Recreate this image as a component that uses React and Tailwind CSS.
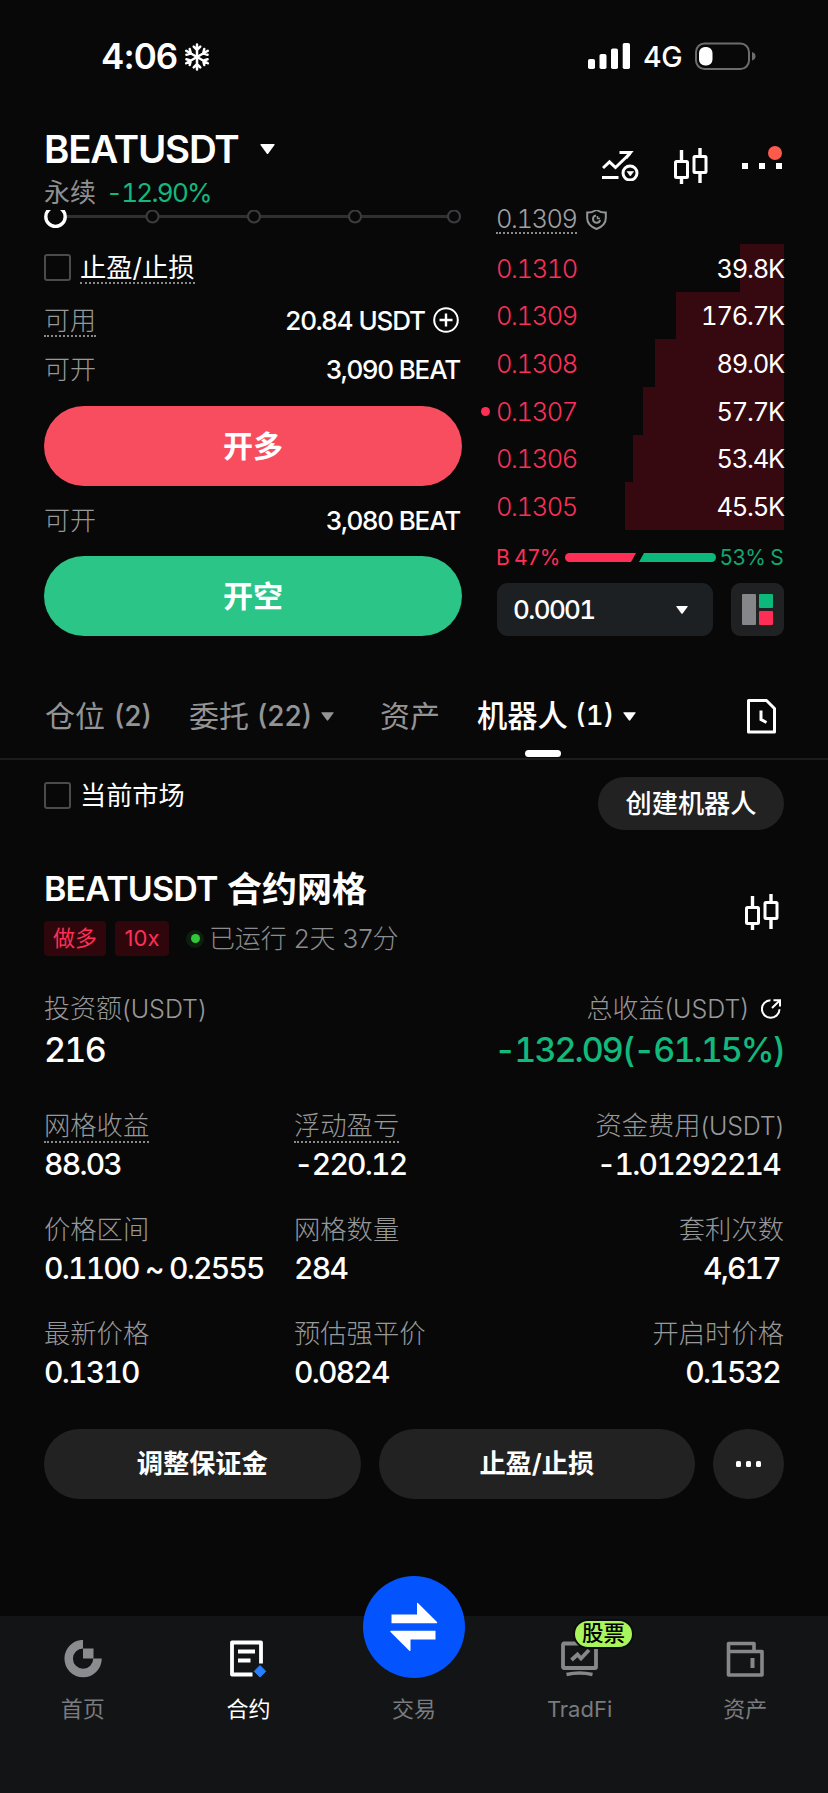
import React from 'react';

const asks = [
  { price: '0.1310', amount: '39.8K', depth: 44 },
  { price: '0.1309', amount: '176.7K', depth: 108 },
  { price: '0.1308', amount: '89.0K', depth: 129 },
  { price: '0.1307', amount: '57.7K', depth: 141, mine: true },
  { price: '0.1306', amount: '53.4K', depth: 151 },
  { price: '0.1305', amount: '45.5K', depth: 159 },
];

const stats = [
  [
    { label: '网格收益', value: '88.03', hint: true },
    { label: '浮动盈亏', value: '-220.12', hint: true },
    { label: '资金费用', unit: '(USDT)', value: '-1.01292214' },
  ],
  [
    { label: '价格区间', value: '0.1100 ~ 0.2555' },
    { label: '网格数量', value: '284' },
    { label: '套利次数', value: '4,617' },
  ],
  [
    { label: '最新价格', value: '0.1310' },
    { label: '预估强平价', value: '0.0824' },
    { label: '开启时价格', value: '0.1532' },
  ],
];

const Caret = ({ className }) => (
  <svg viewBox="0 0 15 10" className={className} fill="currentColor">
    <path d="M1 0h13q1 0 .5 1L8.3 9.4q-.8 1-1.6 0L.5 1Q0 0 1 0z" />
  </svg>
);

const Candles = () => (
  <svg width="34" height="36" viewBox="0 0 34 36" fill="none" stroke="#fff" strokeWidth="3">
    <rect x="1.5" y="13.5" width="12" height="16" rx="1" />
    <path d="M7.5 2v11M7.5 30v6" strokeWidth="3.4" />
    <rect x="20" y="8.5" width="12" height="16" rx="1" />
    <path d="M26 0v8M26 25v10" strokeWidth="3.4" />
  </svg>
);

const Checkbox = () => <span className="size-[27px] rounded-[3px] border-2 border-[#4b4b4d]" />;

const StatusBar = () => (
  <div className="flex h-[112px] items-center pl-[101px] pr-[72px]">
    <span className="w-[76px] text-[35px] font-semibold leading-none tracking-[-0.9px]">4:06</span>
    <svg className="ml-[7px] mt-[2px]" width="26" height="28" viewBox="0 0 26 28" fill="none" stroke="#fff" strokeWidth="2.5" strokeLinecap="round">
      {[0, 60, 120, 180, 240, 300].map((deg) => (
        <path key={deg} d="M13 14V1.5M9.7 3.7L13 6.9l3.3-3.2" transform={`rotate(${deg} 13 14)`} />
      ))}
    </svg>
    <svg className="ml-auto" width="42" height="26" viewBox="0 0 42 26" fill="#fff">
      <rect x="0" y="16" width="7" height="10" rx="1.8" />
      <rect x="11.5" y="11" width="7" height="15" rx="1.8" />
      <rect x="23" y="5.5" width="7" height="20.5" rx="1.8" />
      <rect x="34.7" y="0" width="7.3" height="26" rx="1.8" />
    </svg>
    <span className="ml-[13px] mt-[3px] w-[39px] text-[28.5px] font-medium leading-none tracking-[-0.5px]">4G</span>
    <svg className="ml-[13px]" width="61" height="28" viewBox="0 0 61 28">
      <rect x="1" y="1.5" width="53" height="25.5" rx="8.5" fill="none" stroke="#6c6c6c" strokeWidth="2" />
      <rect x="4" y="5" width="13.5" height="18.5" rx="6" fill="#fff" />
      <path d="M57 10q3.5 1 3.5 4.3T57 18.5z" fill="#6c6c6c" />
    </svg>
  </div>
);

const Header = () => (
  <div className="flex h-[98px] justify-between pl-[44px] pr-[46px]">
    <div>
      <div className="flex h-[74px] items-center">
        <h1 className="w-[194px] whitespace-nowrap text-[38.5px] font-semibold leading-none tracking-[-1.2px]">BEATUSDT</h1>
        <Caret className="ml-[22px] h-[10px] w-[15px]" />
      </div>
      <div className="-mt-[6px] flex h-[26px] items-center text-[26px] leading-none">
        <span className="text-[#8e8f91]">永续</span>
        <span className="ml-[10px] tabular-nums tracking-[-1.7px] text-[#12b87c]">-12.90%</span>
      </div>
    </div>
    <div className="flex items-start pt-9">
      <svg className="mt-[3px]" width="37" height="30" viewBox="0 0 37 30" fill="none" stroke="#fff" strokeWidth="3">
        <path d="M1 17l6.5-6.2 6 5.7L28 2.5" />
        <path d="M17.5 1.5H28.5L24 7" />
        <path d="M0 26.5h16.5" />
        <circle cx="28" cy="22" r="7" />
        <path d="M25 20.5h6.6L28.3 25z" fill="#fff" strokeWidth="0.6" />
      </svg>
      <div className="ml-[35px]"><Candles /></div>
      <div className="relative ml-[34px] mt-[15px] flex w-[40px] justify-between">
        <span className="size-[6px] bg-white" />
        <span className="size-[6px] bg-white" />
        <span className="size-[6px] bg-white" />
        <span className="absolute -top-[17px] left-[26px] size-[14px] rounded-full bg-[#fc5a4a]" />
      </div>
    </div>
  </div>
);

const AvailRow = ({ className, value }) => (
  <div className={`flex items-center justify-between text-[26px] leading-none ${className}`}>
    <span className="font-light text-[#97989a]">可开</span>
    <span className="pr-[2px] font-medium tracking-[-1.15px]">{value}</span>
  </div>
);

const OrderForm = () => (
  <div className="w-[418px]">
    <svg className="h-[30px] w-[418px]" viewBox="0 0 418 30" fill="none">
      <path d="M22 6.5H404" stroke="#303033" strokeWidth="3" />
      <circle cx="11.5" cy="6.7" r="9.7" fill="#080808" stroke="#fff" strokeWidth="3.4" />
      {[108.5, 210, 311, 410].map((cx) => (
        <circle key={cx} cx={cx} cy="6.5" r="6" fill="#080808" stroke="#3c3c3f" strokeWidth="2.2" />
      ))}
    </svg>
    <div className="flex h-[55px] items-center">
      <Checkbox />
      <span className="ml-[9px] mt-[2px] whitespace-nowrap border-b-2 border-dotted border-[#8a8a8a] text-[26.3px] leading-[29px]">止盈/止损</span>
    </div>
    <div className="flex h-[50px] items-center justify-between text-[26px]">
      <span className="mt-[2px] border-b-2 border-dotted border-[#8a8a8a] font-light leading-[29px] text-[#97989a]">可用</span>
      <span className="flex items-center gap-[8px] pr-[3px]">
        <span className="font-medium tracking-[-1.1px]">20.84 USDT</span>
        <svg width="26" height="26" viewBox="0 0 26 26" fill="none" stroke="#fff" strokeWidth="2">
          <circle cx="13" cy="13" r="11.8" />
          <path d="M13 6.5v13M6.5 13h13" strokeWidth="2.4" />
        </svg>
      </span>
    </div>
    <AvailRow className="h-[50px]" value="3,090 BEAT" />
    <button className="mt-[11px] h-[80px] w-full rounded-full bg-[#f84d5f] text-[30px] font-bold">开多</button>
    <AvailRow className="h-[70px] pb-[1px]" value="3,080 BEAT" />
    <button className="h-[80px] w-full rounded-full bg-[#2cc588] text-[30px] font-bold">开空</button>
  </div>
);

const OrderBook = () => (
  <div className="w-[288px] tabular-nums">
    <div className="flex h-[34px] items-start">
      <span className="-mt-[4px] border-b-2 border-dotted border-[#8a8a8a] text-[25.5px] font-light leading-[26px] tracking-[-1.45px] text-[#a0a1a2]">0.1309</span>
      <svg className="ml-[9px]" width="21" height="20" viewBox="0 0 21 20" fill="none" stroke="#929394" strokeWidth="2">
        <path d="M1.2 2.5Q6 2.8 10.5 0Q15 2.8 19.8 2.5V8q0 7.5-9.300 11Q1.2 15.5 1.2 8z" />
        <path d="M10 5.6a3.6 3.6 0 1 0 4.1 4.4" />
        <path d="M11.5 6v2.5h2.5" strokeWidth="1.5" />
      </svg>
    </div>
    {asks.map((row) => (
      <div key={row.price} className="relative flex h-[47.7px] items-center justify-between pt-[1px] text-[25.5px] leading-none">
        <span className="absolute right-0 top-0 h-full bg-[#36080f]" style={{ width: row.depth }} />
        {row.mine && <span className="absolute -left-[15px] size-[9px] rounded-full bg-[#ff2e57]" />}
        <span className="relative font-light tracking-[-1.4px] text-[#fb3059]">{row.price}</span>
        <span className="relative tracking-[-1.2px]">{row.amount}</span>
      </div>
    ))}
    <div className="mt-[16px] flex h-[22px] items-center whitespace-nowrap text-[21px] leading-none tracking-[-0.7px]">
      <span className="w-[69px] text-[#ff2e57]">B 47%</span>
      <svg width="151" height="9" viewBox="0 0 151 9">
        <path d="M4.5 0H71l-5 9H4.5a4.5 4.5 0 0 1 0-9z" fill="#ff2e57" />
        <path d="M79 0h67.5a4.5 4.5 0 0 1 0 9H74z" fill="#0cb97b" />
      </svg>
      <span className="ml-auto pr-[1px] text-right text-[#12a671]">53% S</span>
    </div>
    <div className="mt-[15px] flex justify-between">
      <div className="ml-[1px] flex h-[53px] w-[216px] items-center justify-between rounded-[11px] bg-[#1d2023] pl-[16px] pr-[25px]">
        <span className="text-[26px] font-medium leading-none tracking-[-1.6px]">0.0001</span>
        <Caret className="h-[8px] w-[12px]" />
      </div>
      <div className="flex size-[53px] items-center justify-center rounded-[9px] bg-[#1f2123]">
        <div className="grid size-[31px] grid-cols-2 grid-rows-2 gap-[3px]">
          <span className="row-span-2 rounded-[1px] bg-[#85868a]" />
          <span className="rounded-[1px] bg-[#0cb97b]" />
          <span className="rounded-[1px] bg-[#ff2e57]" />
        </div>
      </div>
    </div>
  </div>
);

const Tabs = () => (
  <div className="mt-[72px] h-[52px] border-b-2 border-[#1c1c1c]">
    <div className="flex h-[50px] items-start whitespace-nowrap pl-[45px] pr-[52px] text-[30px] leading-none text-[#939496]">
      <span className="-mt-[7px] flex w-[144px] items-center">仓位<span className="ml-[9px] text-[28px] font-medium">(2)</span></span>
      <span className="-mt-[7px] flex w-[191px] items-center">委托<span className="ml-[8px] text-[28px] font-medium">(22)</span><Caret className="ml-[9px] h-[9px] w-[13px]" /></span>
      <span className="-mt-[7px] w-[97px]">资产</span>
      <span className="relative flex h-[50px] items-start font-medium text-white">
        <span className="-mt-[7px] flex items-center text-[30.3px]">
          机器人<span className="ml-[7px] text-[27.5px] tabular-nums">(1)</span>
          <Caret className="ml-[9px] h-[9px] w-[13px]" />
        </span>
        <span className="absolute bottom-[1px] left-[48px] h-[7px] w-[36px] rounded-full bg-white" />
      </span>
      <svg className="-mt-[9px] ml-auto" width="29" height="35" viewBox="0 0 29 35" fill="none" stroke="#fff" strokeWidth="3">
        <path d="M1.5 1.5H19.5L27.5 9.5V33H1.5z" strokeLinejoin="round" />
        <path d="M14 11.5v9l5.5 3" />
      </svg>
    </div>
  </div>
);

const Stat = ({ label, unit, value, hint, right }) => (
  <div className={right ? 'text-right' : ''}>
    <div className="h-[38px] text-[26.3px] font-light leading-[32px] text-[#97989a]">
      {hint ? <span className="inline-block border-b-2 border-dotted border-[#8a8a8a] leading-[31px]">{label}</span> : label}
      {unit && <span className="text-[25px] tracking-[-0.2px]">{unit}</span>}
    </div>
    <div className={`-mt-[1px] whitespace-nowrap text-[30px] font-medium tabular-nums leading-[34px] tracking-[-1.75px] ${right ? 'pr-[4px]' : ''}`}>{value}</div>
  </div>
);

const BotCard = () => (
  <div className="px-[44px]">
    <div className="flex justify-between">
      <div className="flex h-[70px] items-center text-[26.2px] leading-none">
        <Checkbox />
        <span className="ml-[9px] mt-[2px]">当前市场</span>
      </div>
      <button className="mt-[17px] h-[53px] w-[186px] rounded-full bg-[#222] pt-[1px] text-[26.2px] font-medium">创建机器人</button>
    </div>
    <div className="mt-[38px] flex justify-between">
      <div>
        <h2 className="flex h-[42px] items-center whitespace-nowrap text-[34px] font-semibold leading-none">
          <span className="w-[183px] tracking-[-0.85px]">BEATUSDT</span>
          <span className="text-[35px]">合约网格</span>
        </h2>
        <div className="mt-[11px] flex h-[35px] items-center whitespace-nowrap text-[22px] text-[#ff2e57]">
          <span className="flex h-[35px] w-[62px] items-center justify-center rounded-[4px] bg-[#30060d]">做多</span>
          <span className="ml-[9px] flex h-[35px] w-[54px] items-center justify-center rounded-[4px] bg-[#30060d]">10x</span>
          <span className="ml-[17px] flex size-[18px] items-center justify-center rounded-full bg-[#0c1f0d]">
            <span className="size-[9px] rounded-full bg-[#32c73a]" />
          </span>
          <span className="ml-[5px] text-[26px] font-light tracking-[-0.15px] text-[#8b8c8e]">已运行 2天 37分</span>
        </div>
      </div>
      <div className="pr-[5px] pt-[26px]"><Candles /></div>
    </div>
    <div className="mt-[37px] flex justify-between">
      <div>
        <div className="text-[26px] font-light leading-[32px] text-[#97989a]">投资额<span className="text-[25px]">(USDT)</span></div>
        <div className="mt-[5px] text-[34px] font-medium tabular-nums leading-[40px] tracking-[-1.7px]">216</div>
      </div>
      <div className="text-right">
        <div className="flex items-center justify-end text-[26px] font-light leading-[32px] text-[#97989a]">
          总收益<span className="text-[25px]">(USDT)</span>
          <svg className="ml-[12px] mr-[3px]" width="20" height="20" viewBox="0 0 20 20" fill="none" stroke="#fff" strokeWidth="2">
            <path d="M9.5 1.2a8.8 8.8 0 1 0 9 9" />
            <path d="M12.5 1.2H19v6.3M18.5 1.7L11 9" />
          </svg>
        </div>
        <div className="mt-[5px] whitespace-nowrap text-[34px] font-medium tabular-nums leading-[40px] tracking-[-1.95px] text-[#12b87c]">-132.09(-61.15%)</div>
      </div>
    </div>
    <div className="mt-[40px] flex flex-col gap-[33px]">
      {stats.map((row) => (
        <div key={row[0].label} className="grid grid-cols-[250px_200px_1fr]">
          <Stat {...row[0]} />
          <Stat {...row[1]} />
          <Stat {...row[2]} right />
        </div>
      ))}
    </div>
    <div className="mt-[40px] flex h-[70px] gap-[18px] text-[26.2px] font-semibold">
      <button className="flex-1 rounded-full bg-[#222]">调整保证金</button>
      <button className="flex-1 rounded-full bg-[#222]">止盈/止损</button>
      <button className="flex w-[71px] items-center justify-center gap-[4.5px] rounded-full bg-[#222]">
        <span className="size-[5.5px] rounded-[1.5px] bg-white" />
        <span className="size-[5.5px] rounded-[1.5px] bg-white" />
        <span className="size-[5.5px] rounded-[1.5px] bg-white" />
      </button>
    </div>
  </div>
);

const NavItem = ({ label, active, children }) => (
  <div className={`flex flex-1 flex-col items-center text-[22px] leading-none ${active ? 'text-white' : 'text-[#797b7e]'}`}>
    <div className="relative h-[59px] pt-[1px]">{children}</div>
    <span>{label}</span>
  </div>
);

const BottomNav = () => (
  <div className="mt-auto flex h-[177px] bg-[#131416] pt-[23px]">
    <NavItem label="首页">
      <svg width="38" height="38" viewBox="0 0 38 38">
        <path d="M19 4.2A14.4 14.4 0 1 0 33.5 18.5" fill="none" stroke="#8a8c8f" strokeWidth="8.5" />
        <path d="M19 8.5h10.5v10H19z" fill="#8a8c8f" />
      </svg>
    </NavItem>
    <NavItem label="合约" active>
      <svg width="38" height="38" viewBox="0 0 38 38" fill="none" stroke="#fff" strokeWidth="3.8">
        <path d="M32 23.5V2.5H3V34.5H23.5" strokeLinejoin="round" />
        <path d="M9 11.5h17M9 20.5h12.5" />
        <path d="M31 25.5l5.7 5.8-5.7 5.8-5.7-5.8z" fill="#2680ff" stroke="#2680ff" strokeWidth="1" strokeLinejoin="round" />
      </svg>
    </NavItem>
    <NavItem label="交易">
      <div className="absolute -top-[63px] left-1/2 flex size-[102px] -translate-x-1/2 items-center justify-center rounded-full bg-[#0354ff]">
        <svg width="48" height="50" viewBox="0 0 48 50" fill="#fff">
          <path d="M1.5 12.5H27V1.5Q27 0 28.2 1.2L47 20q.8 1.2-.5 1.2H1.5z" />
          <path d="M45.5 37.5H20.5V48q0 1.7-1.2.7L.5 30q-1-1.2.5-1.2h44.5z" />
        </svg>
      </div>
    </NavItem>
    <NavItem label="TradFi">
      <svg width="37" height="38" viewBox="0 0 37 38" fill="none" stroke="#85878a" strokeWidth="3.8">
        <rect x="2" y="3.5" width="33" height="24.5" rx="1" />
        <path d="M10.5 20l6-5.5 3.5 4 8-8.5" />
        <path d="M5.5 34.5q13-3 26 0" strokeWidth="3.5" />
      </svg>
      <span className="absolute -top-[20px] left-[12px] flex h-[30px] w-[61px] items-center justify-center whitespace-nowrap rounded-full border-2 border-[#0b0c0d] bg-[#a8f65c] text-[21.5px] font-medium text-black">股票</span>
    </NavItem>
    <NavItem label="资产">
      <svg width="38" height="38" viewBox="0 0 38 38" fill="none" stroke="#85878a" strokeWidth="3.6" strokeLinejoin="round">
        <path d="M2.5 11V3.5H28V11" />
        <path d="M2.5 11.5H36V35H2.5z" />
        <path d="M26.5 18v10" strokeWidth="4" />
      </svg>
    </NavItem>
  </div>
);

export default function App() {
  return (
    <div className="flex h-[1793px] w-[828px] flex-col overflow-hidden bg-[#080808] font-['Inter','Noto_Sans_CJK_SC',sans-serif] text-white">
      <StatusBar />
      <Header />
      <div className="flex h-[426px] justify-between pl-[44px] pr-[44px]">
        <OrderForm />
        <OrderBook />
      </div>
      <Tabs />
      <BotCard />
      <BottomNav />
    </div>
  );
}
